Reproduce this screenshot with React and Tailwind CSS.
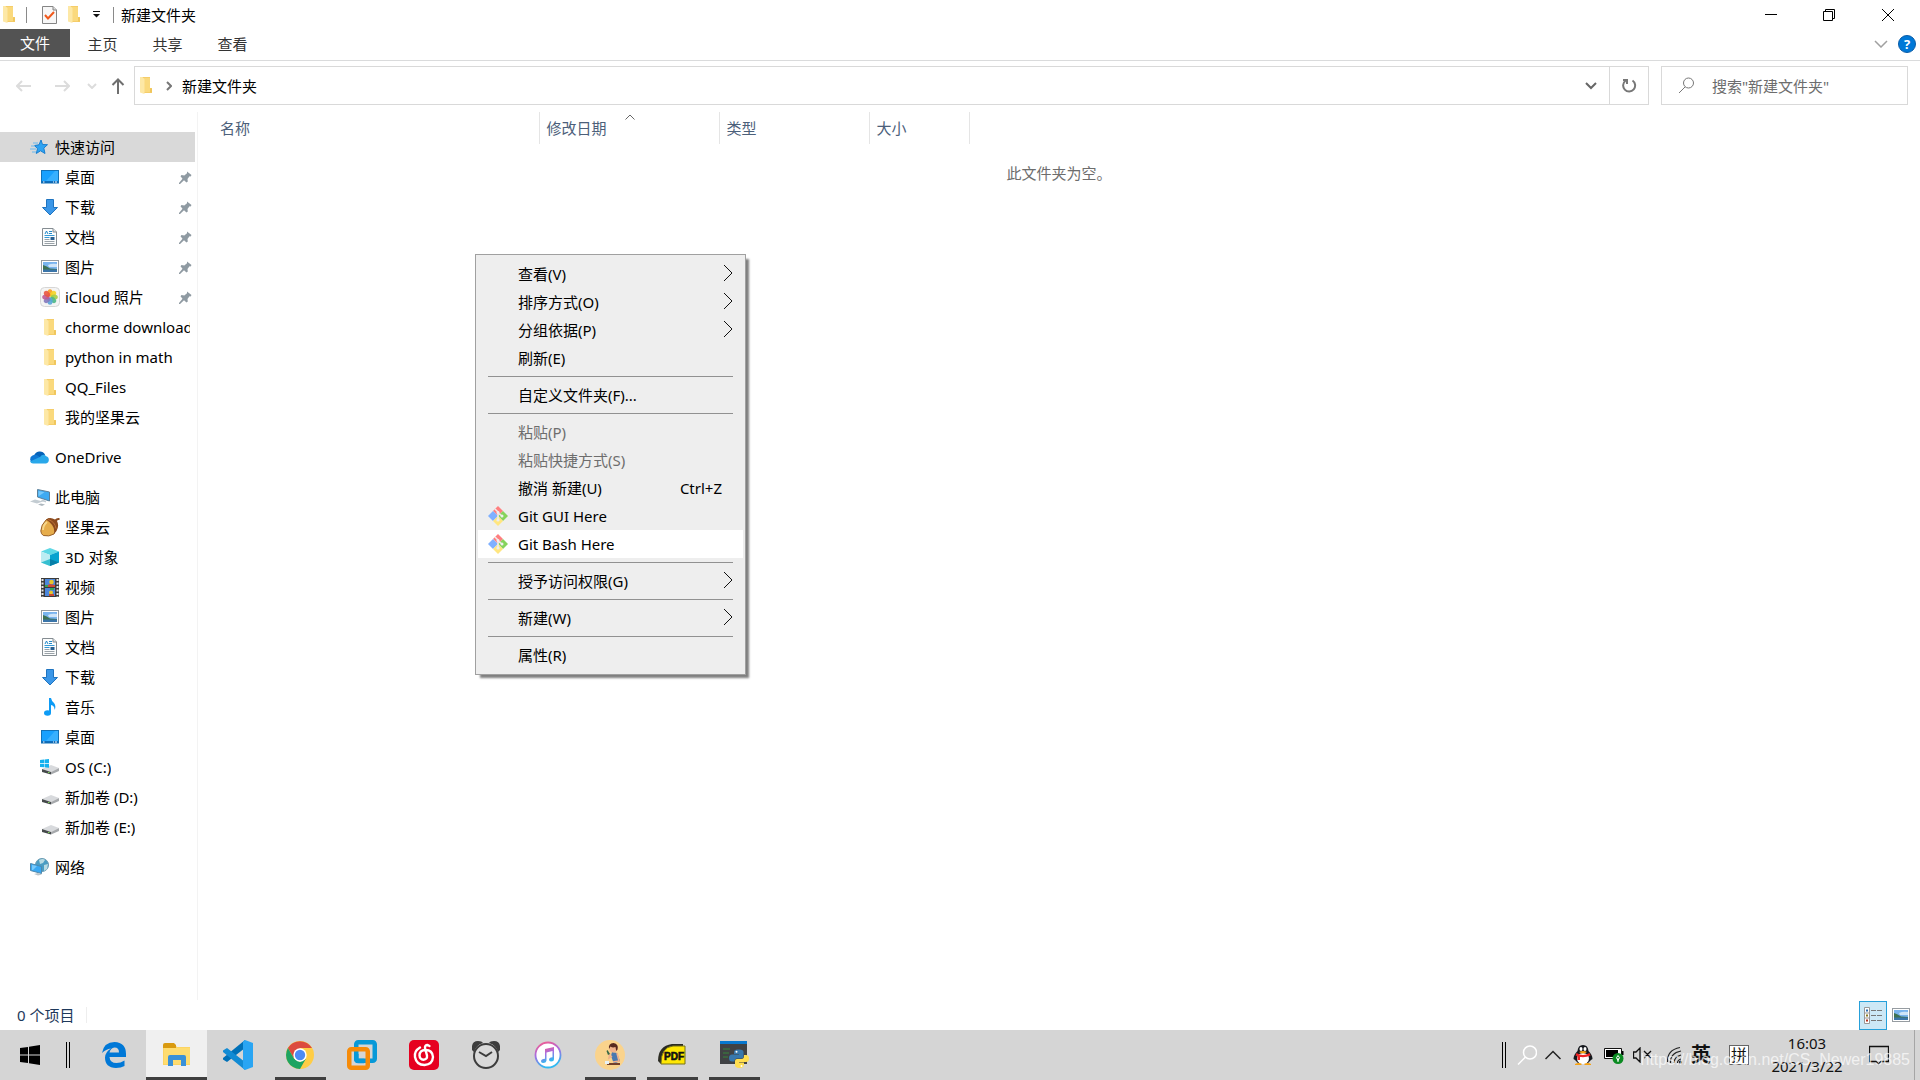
import { useState } from "react";
import clsx from "clsx";

function FolderIcon() {
	return (
		<svg width="12" height="17" viewBox="0 0 12 17">
			<path d="M2 0h8v11h2v5H3V2z" fill="#f5cd6a" />
			<path d="M3 1h7v10h1.500v4H3z" fill="#fad97d" />
			<path d="M0 0h2l2.500 2v15L0 15.500z" fill="#fde8a6" />
			<path d="M10 11l2 .5v4h-2z" fill="#f0c65c" />
		</svg>
	);
}

function StarIcon() {
	return (
		<svg width="19" height="18" viewBox="0 0 19 18">
			<path d="M11 2l1.500 4.500 5 .2-3.700 3.400 1.200 5.400-4.500-2.700L6.300 15.500l1.200-4.800L4.500 7.500l4.500-.7z" fill="#2ea3f2" stroke="#1a7fd0" />
			<path d="M3 5h5M1 8h4M0 11h6M2 14h4" stroke="#6bb9ee" />
		</svg>
	);
}

function DesktopIcon() {
	return (
		<svg width="18" height="14" viewBox="0 0 18 14">
			<rect x=".5" y=".5" width="17" height="12.500" fill="#19a1ff" stroke="#1472b8" />
			<path d="M5 11L14 1h3v10z" fill="#38b0ff" />
			<path d="M1 12h16" stroke="#0b5fa8" strokeWidth="1.500" />
			<path d="M2 12h1.500M12 12h1M14 12h2" stroke="#fff" />
		</svg>
	);
}

function DownloadIcon() {
	return (
		<svg width="16" height="17" viewBox="0 0 16 17">
			<path d="M4.500.5h7v8h4L8 16 .5 8.500h4z" fill="#3b97e8" stroke="#1f74c0" />
		</svg>
	);
}

function DocumentIcon() {
	return (
		<svg width="15" height="18" viewBox="0 0 15 18">
			<path d="M.5.5h10.500l3.500 3.500v13.500H.5z" fill="#fcfdfd" stroke="#858d92" />
			<path d="M11 .5V4h3.500" fill="#dfe3e6" stroke="#858d92" />
			<path d="M3 6l1.500-3L6 6M7 3.500h3M7 5.500h3" stroke="#2389c9" fill="none" />
			<path d="M2.500 7.500h10M2.500 9.500h5" stroke="#3599d6" />
			<path d="M2.500 11.500h5M2.500 13.500h10M2.500 15.500h10" stroke="#9aa2a8" />
			<rect x="8.500" y="9" width="4" height="3" fill="#285f91" />
		</svg>
	);
}

function PictureIcon() {
	return (
		<svg width="18" height="14" viewBox="0 0 18 14">
			<rect x=".5" y=".5" width="17" height="13" fill="#fff" stroke="#969ca1" />
			<rect x="2" y="2" width="14" height="10" fill="#79b4ee" />
			<path d="M7 5q4-2 9-1v3H8z" fill="#cfe5f8" />
			<path d="M2 5q4 1 7 3.500l7 .5v1H2z" fill="#3e7254" />
			<path d="M2 9.500h14V12H2z" fill="#3a75a9" />
		</svg>
	);
}

const petals = ["#f79b22", "#f5d327", "#a5cc46", "#4db886", "#5aa5d9", "#8478bd", "#bd5a93", "#ea5740"];

function PhotosIcon() {
	return (
		<svg width="20" height="20" viewBox="0 0 20 20">
			<rect x=".5" y=".5" width="19" height="19" rx="4" fill="#f4f4f4" stroke="#d6d6d6" />
			{petals.map((color, i) => (
				<ellipse key={color} cx="10" cy="5.800" rx="2.600" ry="3.600" fill={color} opacity=".9" transform={`rotate(${i * 45} 10 10)`} />
			))}
		</svg>
	);
}

function OneDriveIcon() {
	return (
		<svg width="21" height="14" viewBox="0 0 21 14">
			<path d="M5 6a6 6 0 0 1 11-1.500l-3 5z" fill="#0562b8" />
			<path d="M4 13a4 4 0 0 1-.5-7.500Q7 3.800 10 6.500l5 4z" fill="#0f78d4" />
			<path d="M11 7q3-4 6.200-.8A3.800 3.800 0 0 1 17 13.500H4q-2 0-3-2z" fill="#29a8ea" />
		</svg>
	);
}

function ComputerIcon() {
	return (
		<svg width="20" height="18" viewBox="0 0 20 18">
			<path d="M7.500 1.500l12 2.500v9l-12-4z" fill="#3eaaf2" stroke="#5c7f98" />
			<path d="M8.500 3l6 1.300-6 4z" fill="#77c9fb" />
			<path d="M12 11.500l4 1.300v1.700l-5-1.500zM0 13.500L5 11.500l8 2-6 2z" fill="#c3ccd2" />
			<path d="M8 16.500l3-1 4 1-3 1.500z" fill="#aeb8bf" />
		</svg>
	);
}

function AcornIcon() {
	return (
		<svg width="20" height="20" viewBox="0 0 20 20">
			<path d="M6 3Q1 8 .8 14q.2 3 2.500 4.500Q9 20 14 17l3-8L9 1.500z" fill="#e6ad4c" stroke="#98612a" />
			<path d="M3 13q0-5 4-8" stroke="#f7d78b" strokeWidth="2" fill="none" />
			<path d="M6 2.500Q10-.5 15 2.500q1.500-2 4.500-1.500v2q-2-.5-2.500 1 2.500 5-.5 10l-2.500 3q2-8-8-14.500z" fill="#8c4a1d" />
			<path d="M8 2.500q7 2 8 9" stroke="#bb7138" fill="none" />
		</svg>
	);
}

function CubeIcon() {
	return (
		<svg width="18" height="18" viewBox="0 0 18 18">
			<path d="M9 0l9 3.500L9 7 0 3.500z" fill="#5fd8e5" />
			<path d="M0 3.500L9 7v11l-9-3.500z" fill="#bcecf2" />
			<path d="M18 3.500L9 7v11l9-3.500z" fill="#08a2cf" />
			<path d="M0 14.500l9-3.500v7z" fill="#36bfd0" />
			<path d="M9 11l9 3.500L9 18z" fill="#077fa8" />
		</svg>
	);
}

function VideoIcon() {
	return (
		<svg width="18" height="19" viewBox="0 0 18 19">
			<rect width="18" height="19" fill="#3a3a3a" />
			<path d="M1.500 1v18M16.500 1v18" stroke="#e5e5e5" strokeWidth="2" strokeDasharray="2 1.500" />
			<rect x="4" y="1" width="10" height="8" fill="#4c87dc" />
			<rect x="4" y="10" width="10" height="8" fill="#4c87dc" />
			<circle cx="10.500" cy="4" r="2.300" fill="#e8c52c" />
			<path d="M5 8l4-2 5 1v2H5z" fill="#cf4a32" />
			<path d="M4 7h3v2H4zM9 10h4v2H9z" fill="#37a354" />
			<circle cx="10" cy="14.500" r="2" fill="#e8c52c" />
			<path d="M8 16h5v2H8z" fill="#c84832" />
		</svg>
	);
}

function MusicIcon() {
	return (
		<svg width="12" height="18" viewBox="0 0 12 18">
			<ellipse cx="3.500" cy="15" rx="3.500" ry="2.700" fill="#0d9bf5" />
			<path d="M5 0h2q.5 3 3 5 2.500 3 .5 7 .3-4-3.500-5v8H5z" fill="#0d9bf5" />
		</svg>
	);
}

function DriveIcon({ system }) {
	return (
		<svg width="20" height="16" viewBox="0 0 20 16">
			<path d="M2 10l9-4 8 3-8 4z" fill="#d8dadd" />
			<path d="M2 10l9 3v2.500L2 13z" fill="#45494b" />
			<path d="M11 13l8-4v3l-8 3.500z" fill="#a6a9ac" />
			<path d="M8 13.500h1.500" stroke="#7ed957" />
			{system && (
				<path d="M0 1l4-.5V4H0zM4.500.4L9 0v4H4.500zM0 4.800h4v3.400L0 8zM4.500 4.800H9v4l-4.500-.5z" fill="#14b1ee" />
			)}
		</svg>
	);
}

function NetworkIcon() {
	return (
		<svg width="19" height="18" viewBox="0 0 19 18">
			<circle cx="12" cy="7" r="6.500" fill="#4b9dc3" stroke="#6b9bb2" />
			<path d="M9 2q4-2 6 0l-2 3-3 1zM14 7l4-1-1 5-3 2z" fill="#b9dbe3" />
			<path d="M.5 5.500l11 3v7l-11-3z" fill="#39a8f3" stroke="#4e88ad" />
			<path d="M2 7l5 1-4 4H2z" fill="#79cafb" />
			<path d="M4 16l4-1 4 1.500-4 1z" fill="#b9c3c9" />
		</svg>
	);
}

function PinIcon() {
	return (
		<svg width="13" height="13" viewBox="0 0 13 13">
			<path d="M8 .5L12.500 4l-.8 1.500-1.200-.2L8.500 8l.3 2.500-1.300 1L5 9.300 1 13H0v-1l3.500-4.200L1.500 5.300 2.500 4l2.800.4L8 2.200z" fill="#8f9aa2" />
		</svg>
	);
}

function GitIcon() {
	return (
		<svg width="20" height="20" viewBox="0 0 20 20">
			<path d="M10 0l5 5-5 5-5-5z" fill="#ff7f7f" />
			<path d="M5 5l5 5-5 5-5-5z" fill="#7fb0ff" />
			<path d="M15 5l5 5-5 5-5-5z" fill="#86d35c" />
			<path d="M10 10l5 5-5 5-5-5z" fill="#ffe680" />
			<path d="M7 3l3 3v8M10 7l4 3" stroke="#eee" strokeWidth="1.500" fill="none" />
			<circle cx="10" cy="6.500" r="1.500" fill="#eee" />
			<circle cx="14" cy="10" r="1.500" fill="#eee" />
			<circle cx="10" cy="14" r="1.600" fill="#eee" />
		</svg>
	);
}

const quickAccess = [
	{ label: "桌面", icon: <DesktopIcon />, pinned: true },
	{ label: "下载", icon: <DownloadIcon />, pinned: true },
	{ label: "文档", icon: <DocumentIcon />, pinned: true },
	{ label: "图片", icon: <PictureIcon />, pinned: true },
	{ label: "iCloud 照片", icon: <PhotosIcon />, pinned: true },
	{ label: "chorme download", icon: <FolderIcon /> },
	{ label: "python in math", icon: <FolderIcon /> },
	{ label: "QQ_Files", icon: <FolderIcon /> },
	{ label: "我的坚果云", icon: <FolderIcon /> },
];

const thisPC = [
	{ label: "坚果云", icon: <AcornIcon /> },
	{ label: "3D 对象", icon: <CubeIcon /> },
	{ label: "视频", icon: <VideoIcon /> },
	{ label: "图片", icon: <PictureIcon /> },
	{ label: "文档", icon: <DocumentIcon /> },
	{ label: "下载", icon: <DownloadIcon /> },
	{ label: "音乐", icon: <MusicIcon /> },
	{ label: "桌面", icon: <DesktopIcon /> },
	{ label: "OS (C:)", icon: <DriveIcon system /> },
	{ label: "新加卷 (D:)", icon: <DriveIcon /> },
	{ label: "新加卷 (E:)", icon: <DriveIcon /> },
];

function TreeItem({ label, icon, pinned, root, selected }) {
	return (
		<a
			href="#"
			className={clsx(
				"flex h-[30px] items-center whitespace-nowrap text-black",
				root ? "pl-7" : "pl-[38px]",
				selected ? "bg-[#d9d9d9]" : "hover:bg-[#e5f3ff]"
			)}
		>
			<span className="mr-1 flex w-[23px] shrink-0 justify-center">{icon}</span>
			<span className="mr-[5px] min-w-0 overflow-hidden">{label}</span>
			{pinned && (
				<span className="mr-[3px] ml-auto shrink-0">
					<PinIcon />
				</span>
			)}
		</a>
	);
}

function Sidebar() {
	return (
		<nav className="w-[198px] shrink-0 border-r border-[#f3f3f3] pt-5 pr-[2px]">
			<TreeItem root selected label="快速访问" icon={<StarIcon />} />
			{quickAccess.map((item) => (
				<TreeItem key={item.label} {...item} />
			))}
			<div className="my-[10px]">
				<TreeItem root label="OneDrive" icon={<OneDriveIcon />} />
			</div>
			<TreeItem root label="此电脑" icon={<ComputerIcon />} />
			{thisPC.map((item) => (
				<TreeItem key={item.label} {...item} />
			))}
			<div className="mt-[10px]">
				<TreeItem root label="网络" icon={<NetworkIcon />} />
			</div>
		</nav>
	);
}

function TitleBar() {
	return (
		<header className="flex h-[29px] items-center">
			<div className="flex items-center pl-[3px]">
				<FolderIcon />
				<span className="mr-[15px] ml-[11px] h-4 w-px bg-[#8a8a8a]" />
				<button aria-label="属性">
					<svg width="15" height="18" viewBox="0 0 15 18">
						<path d="M.5.5H11l3.500 3.500v13.500H.5z" fill="#f7f7f7" stroke="#858585" />
						<path d="M11 .5V4h3.500" fill="#ddd" stroke="#858585" />
						<path d="M3 9l3 3.500L12 6" fill="none" stroke="#f0591c" strokeWidth="2" />
					</svg>
				</button>
				<button aria-label="新建文件夹" className="ml-[11px]">
					<FolderIcon />
				</button>
				<button aria-label="自定义快速访问工具栏" className="ml-[13px]">
					<svg width="7" height="7" viewBox="0 0 7 7">
						<path d="M0 .5h7" stroke="#111" />
						<path d="M0 3h7L3.500 6.500z" fill="#111" />
					</svg>
				</button>
				<span className="mr-[7px] ml-[13px] h-4 w-px bg-[#8a8a8a]" />
				<h1>新建文件夹</h1>
			</div>
			<div className="ml-auto flex">
				<button aria-label="最小化" className="flex h-7 w-[58px] items-center justify-center hover:bg-gray-200">
					<svg width="12" height="12" viewBox="0 0 12 12" stroke="#000">
						<path d="M0 5.500h12" />
					</svg>
				</button>
				<button aria-label="还原" className="flex h-7 w-[58px] items-center justify-center hover:bg-gray-200">
					<svg width="12" height="12" viewBox="0 0 12 12" stroke="#000" fill="none">
						<path d="M.5 2.500h9v9h-9zM2.500 2.500v-2h9v9h-2" />
					</svg>
				</button>
				<button aria-label="关闭" className="mr-[2px] flex h-7 w-[60px] items-center justify-center hover:bg-red-500">
					<svg width="12" height="12" viewBox="0 0 12 12" stroke="#000">
						<path d="M0 0l12 12M12 0L0 12" />
					</svg>
				</button>
			</div>
		</header>
	);
}

function Ribbon() {
	return (
		<div className="flex h-8 border-b border-[#dadbdc]">
			<button className="h-7 w-[70px] bg-[#535353] text-white">文件</button>
			{["主页", "共享", "查看"].map((tab) => (
				<button key={tab} className="h-[30px] w-[65px] text-[#333] hover:bg-gray-100">
					{tab}
				</button>
			))}
			<div className="ml-auto flex h-[30px] items-center gap-[10px] pr-1">
				<button aria-label="展开功能区">
					<svg width="14" height="8" viewBox="0 0 14 8" fill="none" stroke="#a0a0a0" strokeWidth="1.500">
						<path d="M1 1l6 6 6-6" />
					</svg>
				</button>
				<button aria-label="帮助" className="flex h-[18px] w-[18px] items-center justify-center rounded-full border border-[#0a5ca8] bg-[#0078d7] text-[13px] font-bold text-white">
					?
				</button>
			</div>
		</div>
	);
}

function AddressBar() {
	return (
		<div className="flex pt-[5px] pr-3 pb-[7px] pl-4">
			<div className="flex w-[118px] items-center text-[#dcdcdc]">
				<button aria-label="后退">
					<svg width="16" height="12" viewBox="0 0 16 12" fill="none" stroke="currentColor" strokeWidth="2">
						<path d="M6 1L1 6l5 5M1 6h14" />
					</svg>
				</button>
				<button aria-label="前进" className="ml-[22px]">
					<svg width="16" height="12" viewBox="0 0 16 12" fill="none" stroke="currentColor" strokeWidth="2">
						<path d="M10 1l5 5-5 5M15 6H1" />
					</svg>
				</button>
				<button aria-label="最近浏览的位置" className="ml-[17px]">
					<svg width="10" height="6" viewBox="0 0 10 6" fill="none" stroke="currentColor" strokeWidth="2">
						<path d="M1 1l4 4 4-4" />
					</svg>
				</button>
				<button aria-label="上移" className="ml-[14px] text-[#6f6f6f]">
					<svg width="14" height="16" viewBox="0 0 14 16" fill="none" stroke="currentColor" strokeWidth="2">
						<path d="M1.500 7L7 1.500 12.500 7M7 2v14" />
					</svg>
				</button>
			</div>
			<div className="flex h-[39px] flex-1 items-center border border-[#d9d9d9] pl-[5px]">
				<FolderIcon />
				<svg className="mr-[10px] ml-[14px]" width="6" height="10" viewBox="0 0 6 10" fill="none" stroke="#777" strokeWidth="2">
					<path d="M1 1l4 4-4 4" />
				</svg>
				<a href="#" className="text-black">新建文件夹</a>
				<button aria-label="以前的位置" className="ml-auto flex h-full w-[37px] items-center justify-center">
					<svg width="12" height="8" viewBox="0 0 12 8" fill="none" stroke="#666" strokeWidth="2">
						<path d="M1 1l5 5 5-5" />
					</svg>
				</button>
				<button aria-label="刷新" className="flex h-full w-[39px] items-center justify-center border-l border-[#d9d9d9]">
					<svg width="15" height="15" viewBox="0 0 15 15" fill="none" stroke="#777" strokeWidth="2">
						<path d="M10.500 2.500a6 6 0 1 1-7 .2M1 2h4v4" />
					</svg>
				</button>
			</div>
			<label className="ml-3 flex h-[39px] w-[247px] items-center border border-[#d9d9d9] pl-4">
				<svg className="mr-[17px] shrink-0" width="17" height="17" viewBox="0 0 17 17" fill="none" stroke="#777">
					<circle cx="10.500" cy="6" r="5" />
					<path d="M7 10L1 16" />
				</svg>
				<input
					type="text"
					aria-label="搜索"
					placeholder={'搜索"新建文件夹"'}
					className="w-full min-w-0 outline-none placeholder:text-[#6d6d6d]"
				/>
			</label>
		</div>
	);
}

function FilePane() {
	return (
		<main className="flex-1">
			<table className="table-fixed border-collapse text-left text-[#4c607a]">
				<thead>
					<tr className="h-8">
						<th className="w-[341px] border-r border-[#e5e5e5] pl-[22px] font-normal">名称</th>
						<th className="w-[180px] border-r border-[#e5e5e5] pl-[7px] font-normal">
							<div className="relative">
								修改日期
								<svg className="absolute -top-1 left-[78px]" width="10" height="6" viewBox="0 0 10 6" fill="none" stroke="#666">
									<path d="M.5 5.500L5 1l4.500 4.500" />
								</svg>
							</div>
						</th>
						<th className="w-[150px] border-r border-[#e5e5e5] pl-[7px] font-normal">类型</th>
						<th className="w-[100px] border-r border-[#e5e5e5] pl-[7px] font-normal">大小</th>
					</tr>
				</thead>
			</table>
			<p className="pt-[19px] text-center text-[#6d6d6d]">此文件夹为空。</p>
		</main>
	);
}

const menuGroups = [
	[
		{ label: "查看(V)", sub: true },
		{ label: "排序方式(O)", sub: true },
		{ label: "分组依据(P)", sub: true },
		{ label: "刷新(E)" },
	],
	[{ label: "自定义文件夹(F)..." }],
	[
		{ label: "粘贴(P)", disabled: true },
		{ label: "粘贴快捷方式(S)", disabled: true },
		{ label: "撤消 新建(U)", shortcut: "Ctrl+Z" },
		{ label: "Git GUI Here", git: true },
		{ label: "Git Bash Here", git: true },
	],
	[{ label: "授予访问权限(G)", sub: true }],
	[{ label: "新建(W)", sub: true }],
	[{ label: "属性(R)" }],
];

function ContextMenu() {
	const [active, setActive] = useState("Git Bash Here");

	return (
		<div
			role="menu"
			className="absolute top-[254px] left-[475px] w-[271px] border border-[#a0a0a0] bg-[#eee] px-[2px] py-[5px] shadow-[4px_4px_2px_-1px_rgba(0,0,0,0.5)]"
		>
			{menuGroups.map((group, i) => (
				<div key={i} className={clsx(i > 0 && "before:mx-[10px] before:my-1 before:block before:h-px before:bg-[#919191]")}>
					{group.map((item) => (
						<button
							key={item.label}
							role="menuitem"
							disabled={item.disabled}
							onMouseEnter={() => setActive(item.label)}
							className={clsx(
								"flex h-7 w-full items-center pr-[10px] text-left",
								item.disabled ? "text-[#6d6d6d]" : "text-black",
								active === item.label && "bg-white"
							)}
						>
							<span className="w-10 shrink-0 pl-[10px]">{item.git && <GitIcon />}</span>
							<span>{item.label}</span>
							{item.shortcut && <span className="mr-[11px] ml-auto">{item.shortcut}</span>}
							{item.sub && (
								<svg className="ml-auto" width="10" height="18" viewBox="0 0 10 18" fill="none" stroke="#111">
									<path d="M1 0l8 8-8 8" />
								</svg>
							)}
						</button>
					))}
				</div>
			))}
		</div>
	);
}

function StatusBar() {
	return (
		<footer className="flex h-[30px] items-center text-[#1e395b]">
			<span className="border-r border-[#eee] pr-3 pl-[17px] leading-4">0 个项目</span>
			<div className="ml-auto flex items-center gap-[5px] pr-[10px]">
				<button aria-label="详细信息" className="flex h-[29px] w-7 items-center justify-center border border-[#26a0da] bg-[#cce8f6]">
					<svg width="18" height="17" viewBox="0 0 18 17">
						<path d="M.5.5h5v16h-5zM.5 6h5M.5 11h5" fill="#fff" stroke="#999" />
						<path d="M2 2.500h2v2H2z" fill="#2b6cb0" />
						<path d="M2 7.500h2v2H2z" fill="#8a7a20" />
						<path d="M2 12.500h2v2H2z" fill="#b7301c" />
						<path d="M7 3.500h5M13 3.500h5M7 8.500h5M13 8.500h5M7 13.500h5M13 13.500h5" stroke="#777" />
					</svg>
				</button>
				<button aria-label="大缩略图">
					<PictureIcon />
				</button>
			</div>
		</footer>
	);
}

const apps = [
	{
		name: "Edge",
		icon: (
			<svg width="26" height="28" viewBox="0 0 26 28">
				<path d="M1 12Q3 1 13.500 1 25 1.500 25 13v3H8.500q.5 6 7 6 4 0 8-2.500v5.500Q20 27 15 27 4 26.500 4 16.500q.5-6 6-9Q5 8 1 12zM8.500 11.500H18q0-5-4.500-5-4 .5-5 5z" fill="#0078d7" />
			</svg>
		),
	},
	{
		name: "文件资源管理器",
		state: "active",
		icon: (
			<svg width="28" height="24" viewBox="0 0 28 24">
				<path d="M0 2h12l2 2h13v18H0z" fill="#fcd462" />
				<path d="M0 2q0-2 2-2h9l2 2v3H0z" fill="#d99a10" />
				<path d="M1 5h26v16H1z" fill="#fedc70" />
				<path d="M5 23V14q0-2 2-2h14q2 0 2 2v9h-5v-6h-8v6z" fill="#3a91d8" />
			</svg>
		),
	},
	{
		name: "Visual Studio Code",
		icon: (
			<svg width="30" height="30" viewBox="0 0 30 30">
				<path d="M22 0v8L4 22 0 19.500V18z" fill="#0071b8" />
				<path d="M22 30v-8L4 8 0 10.500V12z" fill="#128bd4" />
				<path d="M22 0l8 3v24l-8 3-2-1.500V1.500z" fill="#29a5f3" />
			</svg>
		),
	},
	{
		name: "Chrome",
		state: "open",
		icon: (
			<svg width="28" height="28" viewBox="0 0 28 28">
				<circle cx="14" cy="14" r="14" fill="#ffcd45" />
				<path d="M1.900 7A14 14 0 0 1 26 7H14L8 17.500z" fill="#dc4b3e" />
				<path d="M1.900 7a14 14 0 0 0 12.100 21l6-10.500L14 21 8 17.500z" fill="#1da462" />
				<circle cx="14" cy="14" r="6.700" fill="#fff" />
				<circle cx="14" cy="14" r="5.200" fill="#4c8bf5" />
			</svg>
		),
	},
	{
		name: "VMware",
		icon: (
			<svg width="30" height="30" viewBox="0 0 30 30" fill="none" strokeWidth="4.500">
				<rect x="9.250" y="2.250" width="18.500" height="18.500" rx="2" stroke="#0799d8" />
				<rect x="2.250" y="9.250" width="18.500" height="18.500" rx="2" stroke="#f68b09" />
				<path d="M9.250 14v5q0 2 2 2h6" stroke="#0799d8" />
			</svg>
		),
	},
	{
		name: "网易云音乐",
		icon: (
			<svg width="30" height="30" viewBox="0 0 30 30" fill="none">
				<rect width="30" height="30" rx="5" fill="#e60020" />
				<path d="M11 7.500Q5 11 6 17q1.500 8 9.500 8 8-.5 8.500-8-.5-7-7.500-7-6 0-6 5.500.3 4 4 4.200 4-.2 3.500-4.200l-2-7.500q-.2-3 2.500-3l2 1" stroke="#fff" strokeWidth="2.400" strokeLinecap="round" />
			</svg>
		),
	},
	{
		name: "闹钟",
		icon: (
			<svg width="28" height="28" viewBox="0 0 28 28">
				<path d="M0 9Q-1 0 6 0q4 0 5 2Q4 4 2 11zM28 9q1-9-6-9-4 0-5 2 7 2 9 9z" fill="#3d3d3d" />
				<circle cx="14" cy="15" r="12" fill="#dadada" stroke="#3d3d3d" strokeWidth="2" />
				<path d="M7 11l7 4 6-4" fill="none" stroke="#3d3d3d" strokeWidth="2" />
			</svg>
		),
	},
	{
		name: "iTunes",
		icon: (
			<svg width="28" height="28" viewBox="0 0 28 28">
				<defs>
					<linearGradient id="itunes" x1="0" y1="0" x2="0.300" y2="1">
						<stop offset="0" stopColor="#fa5a88" />
						<stop offset=".5" stopColor="#a56de2" />
						<stop offset="1" stopColor="#30b9f1" />
					</linearGradient>
				</defs>
				<circle cx="14" cy="14" r="12.500" fill="#fff" stroke="url(#itunes)" strokeWidth="1.800" />
				<path d="M11 8l9-2v12q0 2.500-3 2.500-2 0-2-1.800 0-2 3.500-2.400V10L12.500 11.500v8Q12 22 9 22q-2 0-2-1.800 0-2 4-2.400z" fill="url(#itunes)" />
			</svg>
		),
	},
	{
		name: "头像",
		state: "open",
		icon: (
			<svg width="30" height="30" viewBox="0 0 30 30">
				<circle cx="15" cy="15" r="15" fill="#fad38c" />
				<path d="M17 12l5 1 3 8-6 3-3-8z" fill="#4a78b0" />
				<path d="M15 13l-1 5 3-2M22 13l2 8-6 1" stroke="#f0b28b" strokeWidth="1.600" fill="none" />
				<circle cx="18.500" cy="8.500" r="4" fill="#f0b28b" />
				<path d="M14 9q-1-5.500 4.500-6 5.500 1 4 6.500l-1.300 1.500-.7-4q-3 1-5-.5z" fill="#57291f" />
				<path d="M12 23h13v2H12z" fill="#74412b" />
				<path d="M10 21h4v3h-4z" fill="#e7f1f5" />
				<path d="M12.500 10l2.500 4-2 1-1.500-4z" fill="#386846" />
			</svg>
		),
	},
	{
		name: "PDF",
		state: "open",
		icon: (
			<svg width="28" height="22" viewBox="0 0 28 22">
				<path d="M0 17Q0 2 14 0h11v3H13Q4 5 3 20z" fill="#2b2b22" />
				<path d="M3 20Q3 3 15 2h12v18z" fill="#ffe704" stroke="#77731b" />
				<text x="6" y="16" fontFamily="Liberation Sans" fontWeight="bold" fontSize="10" fill="#111" stroke="#111" strokeWidth=".6">PDF</text>
			</svg>
		),
	},
	{
		name: "Python",
		state: "open",
		icon: (
			<svg width="30" height="30" viewBox="0 0 30 30">
				<path d="M1 1h27v23H1z" fill="#404244" />
				<path d="M1 1h27v3H1z" fill="#0878ce" />
				<path d="M4 9h7M4 13h6M4 17h5" stroke="#36843b" />
				<path d="M15 14v-2q0-2.500 3.500-2.500h2q4 0 4 2.500v4.500q0 2-2 2H18q-2.500 0-2.500 3H13q-3 0-3-3.500t3-3.500h7v-.5z" fill="#3878ac" />
				<path d="M25 15h2q3 0 3 3.500t-3 3.500h-7v.5h5v2q0 3.500-4.500 3.500T16 25v-4q0-2 2-2h4.500q2.500 0 2.500-3z" fill="#ffde50" />
				<circle cx="17.500" cy="11.800" r="1" fill="#fff" />
				<circle cx="22.500" cy="26" r="1" fill="#fff" />
			</svg>
		),
	},
];

function Taskbar() {
	return (
		<div className="relative flex h-[50px] items-center bg-[#d5d5d5] text-[#111]">
			<button aria-label="开始" className="ml-5">
				<svg width="20" height="20" viewBox="0 0 20 20">
					<path d="M0 3l8-1v7.500H0zM9 1.800L20 0v9.500H9zM0 10.500h8V18l-8-1zM9 10.500h11V20L9 18.200z" />
				</svg>
			</button>
			<div className="mr-[13px] ml-[26px] h-[26px] w-1 border-x border-black" />
			{apps.map(({ name, icon, state }) => (
				<button
					key={name}
					aria-label={name}
					className={clsx("flex h-full w-[62px] flex-col items-center", state === "active" && "border-l border-[#d5d5d5] bg-[#f0f0f0]")}
				>
					<span className="flex h-[47px] items-center pt-[3px]">{icon}</span>
					{state && <span className={clsx("h-[3px] bg-[#3f3f3f]", state === "active" ? "w-full" : "w-[51px]")} />}
				</button>
			))}
			<div className="ml-auto flex h-full items-center">
				<div className="h-[26px] w-1 border-x border-black" />
				<button aria-label="搜索" className="ml-[11px]">
					<svg width="20" height="20" viewBox="0 0 20 20" fill="none" stroke="#fff" strokeWidth="1.500">
						<circle cx="13" cy="7.500" r="6.500" />
						<path d="M8.500 12L1 19.500" />
					</svg>
				</button>
				<button aria-label="显示隐藏的图标" className="ml-2">
					<svg width="16" height="10" viewBox="0 0 16 10" fill="none" stroke="#222" strokeWidth="1.500">
						<path d="M.5 9L8 1.500 15.500 9" />
					</svg>
				</button>
				<button aria-label="QQ" className="ml-3">
					<svg width="20" height="20" viewBox="0 0 20 20">
						<path d="M10 0q5 0 5.500 6 4 4 4 8l-1.500 1-3 3H5l-3-3-1.500-1q0-4 4-8Q5 0 10 0z" fill="#14171c" />
						<ellipse cx="10" cy="13.500" rx="6" ry="5.500" fill="#fff" />
						<path d="M3.500 8q6.500 4 13 0l1 2.500q-7.500 3.500-15 0zM4.500 10h2.500v5H4.500z" fill="#ed2424" />
						<ellipse cx="8" cy="4" rx="1.500" ry="2" fill="#fff" />
						<ellipse cx="12" cy="4" rx="1.500" ry="2" fill="#fff" />
						<path d="M6 7q4-2 8 0-4 3-8 0z" fill="#f6a212" />
						<path d="M2 19q4-2 7 0l-1 1H2zM11 19q4-2 7 0v1h-6z" fill="#f6a212" />
					</svg>
				</button>
				<button aria-label="电池" className="ml-[11px]">
					<svg width="20" height="18" viewBox="0 0 20 18">
						<path d="M.5 2.500h17v10H.5z" fill="#fff" stroke="#111" />
						<path d="M2 4h12v7H2z" />
						<path d="M18 5h1.500v4H18" />
						<circle cx="14" cy="12.500" r="5.500" fill="#0b8b22" />
						<path d="M14 9.500q3 2 0 5-3-3 0-5zM14 12v4" fill="none" stroke="#fff" />
					</svg>
				</button>
				<button aria-label="静音" className="ml-[9px]">
					<svg width="19" height="16" viewBox="0 0 19 16" fill="none" stroke="#111">
						<path d="M.5 5h2.500l4-4v14l-4-4H.5zM11 4l7 7M18 4l-7 7" strokeWidth="1.300" />
					</svg>
				</button>
				<button aria-label="网络" className="ml-[14px]">
					<svg width="17" height="18" viewBox="0 0 17 18" fill="none" stroke="#222" strokeWidth="1.200">
						<path d="M1.500 16Q1 4 14 1.500M4.500 17Q4 7 15 5M8 17q0-6 7-8M11.500 17q0-3 3.500-4" />
						<circle cx="14.500" cy="16" r="1" fill="#222" />
					</svg>
				</button>
				<button className="ml-2 text-xl leading-5 font-semibold">英</button>
				<button className="ml-[18px] h-5 w-5 border border-[#666] bg-white text-base leading-[18px]">拼</button>
				<button className="ml-[19px] flex w-[78px] flex-col items-center leading-[23px]">
					<span>16:03</span>
					<span>2021/3/22</span>
				</button>
				<button aria-label="通知" className="ml-[23px]">
					<svg width="20" height="20" viewBox="0 0 20 20" fill="none" stroke="#111" strokeWidth="1.300">
						<path d="M.5 1.500h19v15h-7.500l-2.500 2.500L7 16.500H.5z" />
					</svg>
				</button>
				<button aria-label="显示桌面" className="ml-[25px] h-full w-[6px] border-l border-[#a5a5a5]" />
			</div>
			<span className="pointer-events-none absolute right-[10px] bottom-2 text-base leading-6 text-white/70 [font-family:'Liberation_Sans',sans-serif]">
				https://blog.csdn.net/CS_Newer19885
			</span>
		</div>
	);
}

export default function App() {
	return (
		<div className="relative flex min-h-screen flex-col bg-white text-[15px] leading-5 text-black [font-family:'Noto_Sans','Noto_Sans_CJK_SC',sans-serif]">
			<TitleBar />
			<Ribbon />
			<AddressBar />
			<div className="flex flex-1">
				<Sidebar />
				<FilePane />
			</div>
			<StatusBar />
			<Taskbar />
			<ContextMenu />
		</div>
	);
}
